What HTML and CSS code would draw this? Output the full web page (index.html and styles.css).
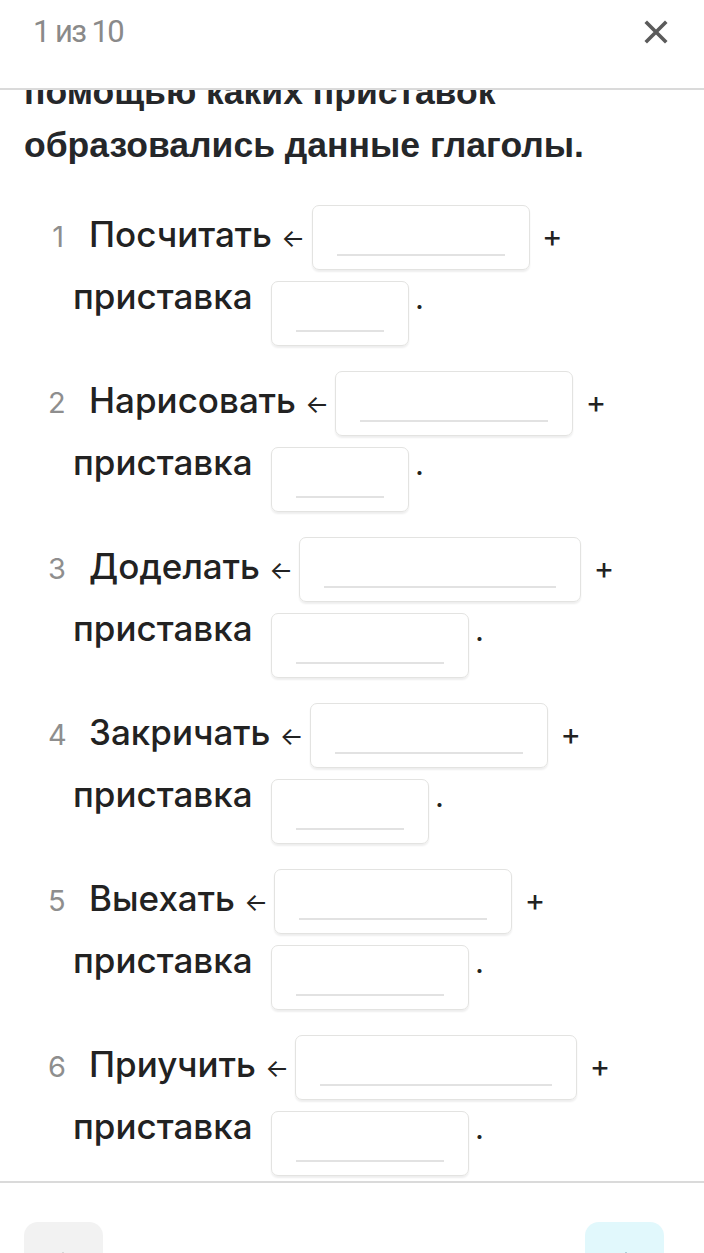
FILE: index.html
```html
<!DOCTYPE html>
<html lang="ru">
<head>
<meta charset="utf-8">
<title>1 из 10</title>
<link rel="stylesheet" href="styles.css">
</head>
<body>
<div class="screen">
  <header class="topbar">
    <span class="counter">1 из 10</span>
    <button class="close" aria-label="Закрыть">
      <svg width="24" height="24" viewBox="0 0 24 24"><path d="M3 3 L21 21 M21 3 L3 21" stroke="#5b5b5b" stroke-width="3.6" stroke-linecap="square" fill="none"/></svg>
    </button>
  </header>
  <main class="content">
    <div class="scroller">
      <h1 class="task">помощью каких приставок<br>образовались данные глаголы.</h1>
      <ol class="items">
        <li class="item"><span class="num">1</span><span class="word">Посчитать</span> <span class="arr">←</span> <span class="slot top w218"></span> <span class="op">+</span><br><span class="word">приставка</span> <span class="slot bottom w138"></span><span class="op">.</span></li>
        <li class="item"><span class="num">2</span><span class="word">Нарисовать</span> <span class="arr">←</span> <span class="slot top w238"></span> <span class="op">+</span><br><span class="word">приставка</span> <span class="slot bottom w138"></span><span class="op">.</span></li>
        <li class="item"><span class="num">3</span><span class="word">Доделать</span> <span class="arr">←</span> <span class="slot top w281"></span> <span class="op">+</span><br><span class="word">приставка</span> <span class="slot bottom w198"></span><span class="op">.</span></li>
        <li class="item"><span class="num">4</span><span class="word">Закричать</span> <span class="arr">←</span> <span class="slot top w238"></span> <span class="op">+</span><br><span class="word">приставка</span> <span class="slot bottom w158"></span><span class="op">.</span></li>
        <li class="item"><span class="num">5</span><span class="word">Выехать</span> <span class="arr">←</span> <span class="slot top w238"></span> <span class="op">+</span><br><span class="word">приставка</span> <span class="slot bottom w198"></span><span class="op">.</span></li>
        <li class="item"><span class="num">6</span><span class="word">Приучить</span> <span class="arr">←</span> <span class="slot top w281"></span> <span class="op">+</span><br><span class="word">приставка</span> <span class="slot bottom w198"></span><span class="op">.</span></li>
      </ol>
    </div>
  </main>
  <footer class="bottombar">
    <button class="nav prev" aria-label="Назад">
      <svg width="28" height="28" viewBox="0 0 28 28"><path d="M24 14 H5 M13 6 L5 14 L13 22" stroke="#8a8a8a" stroke-width="3" stroke-linecap="round" stroke-linejoin="round" fill="none"/></svg>
    </button>
    <button class="nav next" aria-label="Далее">
      <svg width="28" height="28" viewBox="0 0 28 28"><path d="M4 14 H23 M15 6 L23 14 L15 22" stroke="#1f5f73" stroke-width="3" stroke-linecap="round" stroke-linejoin="round" fill="none"/></svg>
    </button>
  </footer>
</div>
</body>
</html>
```
FILE: styles.css
```css
* { box-sizing: border-box; }
html, body { margin: 0; padding: 0; background: #ffffff; }
.screen {
  width: 704px;
  height: 1253px;
  display: flex;
  flex-direction: column;
  overflow: hidden;
}
.topbar {
  height: 90px;
  flex: none;
  display: flex;
  align-items: flex-start;
  justify-content: space-between;
  padding: 14px 36px 0 33px;
  border-bottom: 2px solid #dadada;
}
.counter {
  font-family: Roboto, "Liberation Sans", sans-serif;
  font-size: 31px;
  letter-spacing: -1.6px;
  color: #8a8a8a;
  line-height: 36px;
}
.close {
  border: 0;
  background: none;
  padding: 0;
  margin-top: 6px;
  width: 24px;
  height: 24px;
}
.close svg { display: block; }
.content {
  flex: 1;
  overflow: hidden;
}
.scroller { margin-top: -24px; }
.task {
  margin: 0;
  padding: 0 24px;
  font-family: "Liberation Sans", Arial, sans-serif;
  font-weight: 700;
  font-size: 35.5px;
  line-height: 53px;
  color: #25272a;
}
.items {
  list-style: none;
  margin: 31px 0 0;
  padding: 0 0 0 73px;
  font-family: Inter, "Noto Sans", sans-serif;
  font-size: 35px;
  font-weight: 500;
  line-height: 62px;
  color: #222222;
}
.item { margin-bottom: 42px; }
.num, .arr, .op { line-height: 1; }
.num {
  display: inline-block;
  width: 16px;
  margin-left: -25px;
  margin-right: 25px;
  text-align: right;
  color: #8e8e8e;
  font-size: 29px;
  font-weight: 400;
}
.arr { font-size: 25px; font-weight: 400; }
.op { font-size: 31px; font-weight: 400; }
.slot {
  display: inline-block;
  height: 65px;
  border: 1.5px solid #e3e3e1;
  border-radius: 7px;
  box-shadow: 0 2px 2px rgba(0, 0, 0, 0.07);
  background: linear-gradient(#e2e2e2, #e2e2e2) no-repeat;
  background-size: calc(100% - 48px) 2px;
  background-position: 24px 48px;
}
.slot.top { margin: -30px 3px -30px -3px; vertical-align: 7px; }
.slot.bottom { margin: -30px 6px -30px 9px; vertical-align: -7px; }
.w138 { width: 138px; }
.w158 { width: 158px; }
.w198 { width: 198px; }
.w218 { width: 218px; }
.w238 { width: 238px; }
.w281 { width: 282px; }
.bottombar {
  height: 72px;
  flex: none;
  border-top: 2px solid #dadada;
  display: flex;
  justify-content: space-between;
  align-items: flex-start;
  padding: 39px 40px 0 24px;
}
.nav {
  flex: none;
  width: 79px;
  height: 79px;
  border: 0;
  border-radius: 14px;
  display: flex;
  align-items: center;
  justify-content: center;
  padding: 0;
}
.nav svg { display: block; }
.prev { background: #f2f2f2; }
.next { background: #e1f8fc; }
```
